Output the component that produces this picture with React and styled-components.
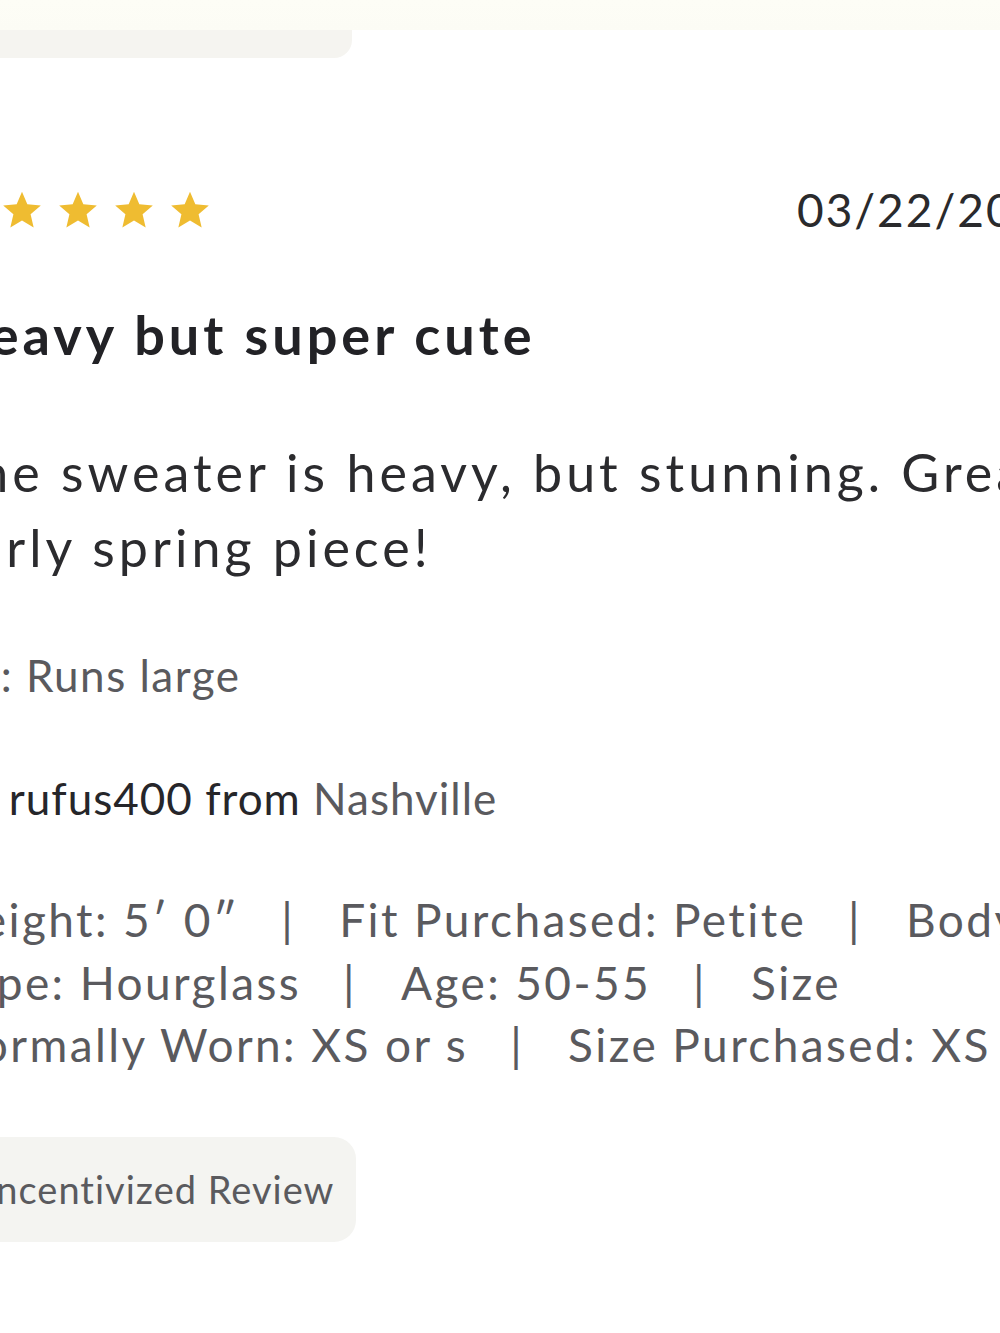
import React from 'react';
import styled, { createGlobalStyle } from 'styled-components';

const GlobalStyle = createGlobalStyle`
  html, body {
    margin: 0;
    padding: 0;
    background: #ffffff;
  }
  body {
    font-family: Lato, "Noto Sans", sans-serif;
    overflow: hidden;
  }
`;

const attributes = [
  ['Height: 5′ 0″', 'Fit Purchased: Petite', 'Body'],
  ['Type: Hourglass', 'Age: 50-55', 'Size'],
  ['Normally Worn: XS or s', 'Size Purchased: XS'],
];

function Star() {
  return (
    <svg width="42" height="42" viewBox="0 0 24 24">
      <path
        d="M12 1.6l3.05 7.1 7.7.66-5.84 5.07 1.75 7.53L12 17.970 5.34 21.96l1.75-7.53L1.25 9.36l7.7-.66z"
        fill="#efbc31"
      />
    </svg>
  );
}

function App() {
  return (
    <Page>
      <GlobalStyle />
      <TopBand />
      <Content>
        <PrevBadge />
        <MetaRow>
          <Stars>
            {[0, 1, 2, 3, 4].map((i) => (
              <Star key={i} />
            ))}
          </Stars>
          <ReviewDate>03/22/2023</ReviewDate>
        </MetaRow>
        <Title>Heavy but super cute</Title>
        <Body>
          <Line>The sweater is heavy, but stunning. Great</Line>
          <Line>early spring piece!</Line>
        </Body>
        <Fit>Fit: Runs large</Fit>
        <Author>
          By rufus400 from <Muted>Nashville</Muted>
        </Author>
        <Attributes>
          {attributes.map((row, idx) => (
            <Line key={idx}>
              {row.map((item, j) => (
                <React.Fragment key={j}>
                  {j > 0 && <Sep>|</Sep>}
                  {item}
                </React.Fragment>
              ))}
            </Line>
          ))}
        </Attributes>
        <Badge>Incentivized Review</Badge>
      </Content>
    </Page>
  );
}

export default App;

const Page = styled.div`
  position: relative;
  width: 1000px;
  height: 1333px;
  overflow: hidden;
  background: #ffffff;
`;

const TopBand = styled.div`
  height: 30px;
  background: linear-gradient(180deg, #fdfdf6 0%, #fcfcf5 100%);
`;

const Content = styled.div`
  display: flex;
  flex-direction: column;
  width: 1127px;
  margin-left: -55px;
  color: #26262a;
`;

const PrevBadge = styled.div`
  width: 407px;
  height: 28px;
  background: #f5f4f0;
  border-bottom-right-radius: 18px;
`;

const MetaRow = styled.div`
  display: flex;
  align-items: center;
  justify-content: space-between;
  height: 50px;
  margin-top: 127px;
`;

const Stars = styled.div`
  display: flex;
  gap: 14px;
`;

const ReviewDate = styled.div`
  font-size: 46px;
  line-height: 50px;
  letter-spacing: 2px;
  color: #2a2a2c;
`;

const Title = styled.h2`
  margin: 70px 0 0;
  font-size: 54px;
  line-height: 60px;
  font-weight: 700;
  letter-spacing: 4px;
  color: #222226;
`;

const Line = styled.div`
  white-space: nowrap;
`;

const Body = styled.div`
  margin-top: 70px;
  font-size: 52px;
  line-height: 75px;
  letter-spacing: 4px;
  color: #2b2b2e;
`;

const Fit = styled.div`
  margin-top: 60px;
  font-size: 44px;
  line-height: 60px;
  letter-spacing: 1.5px;
  color: #5a5a5e;
`;

const Author = styled.div`
  margin-top: 63px;
  font-size: 44px;
  line-height: 60px;
  letter-spacing: 1px;
  color: #26262a;
`;

const Muted = styled.span`
  color: #5a5a5e;
`;

const Attributes = styled.div`
  margin-top: 61px;
  font-size: 46px;
  line-height: 62.5px;
  letter-spacing: 2.4px;
  color: #5a5a5e;
`;

const Sep = styled.span`
  margin: 0 44px 0 42px;
`;

const Badge = styled.div`
  display: flex;
  align-items: center;
  align-self: flex-start;
  height: 105px;
  margin-top: 60px;
  padding: 0 22px 0 40px;
  border-radius: 22px;
  background: #f4f4f1;
  font-size: 38px;
  letter-spacing: 1px;
  color: #5a5a5e;
`;
